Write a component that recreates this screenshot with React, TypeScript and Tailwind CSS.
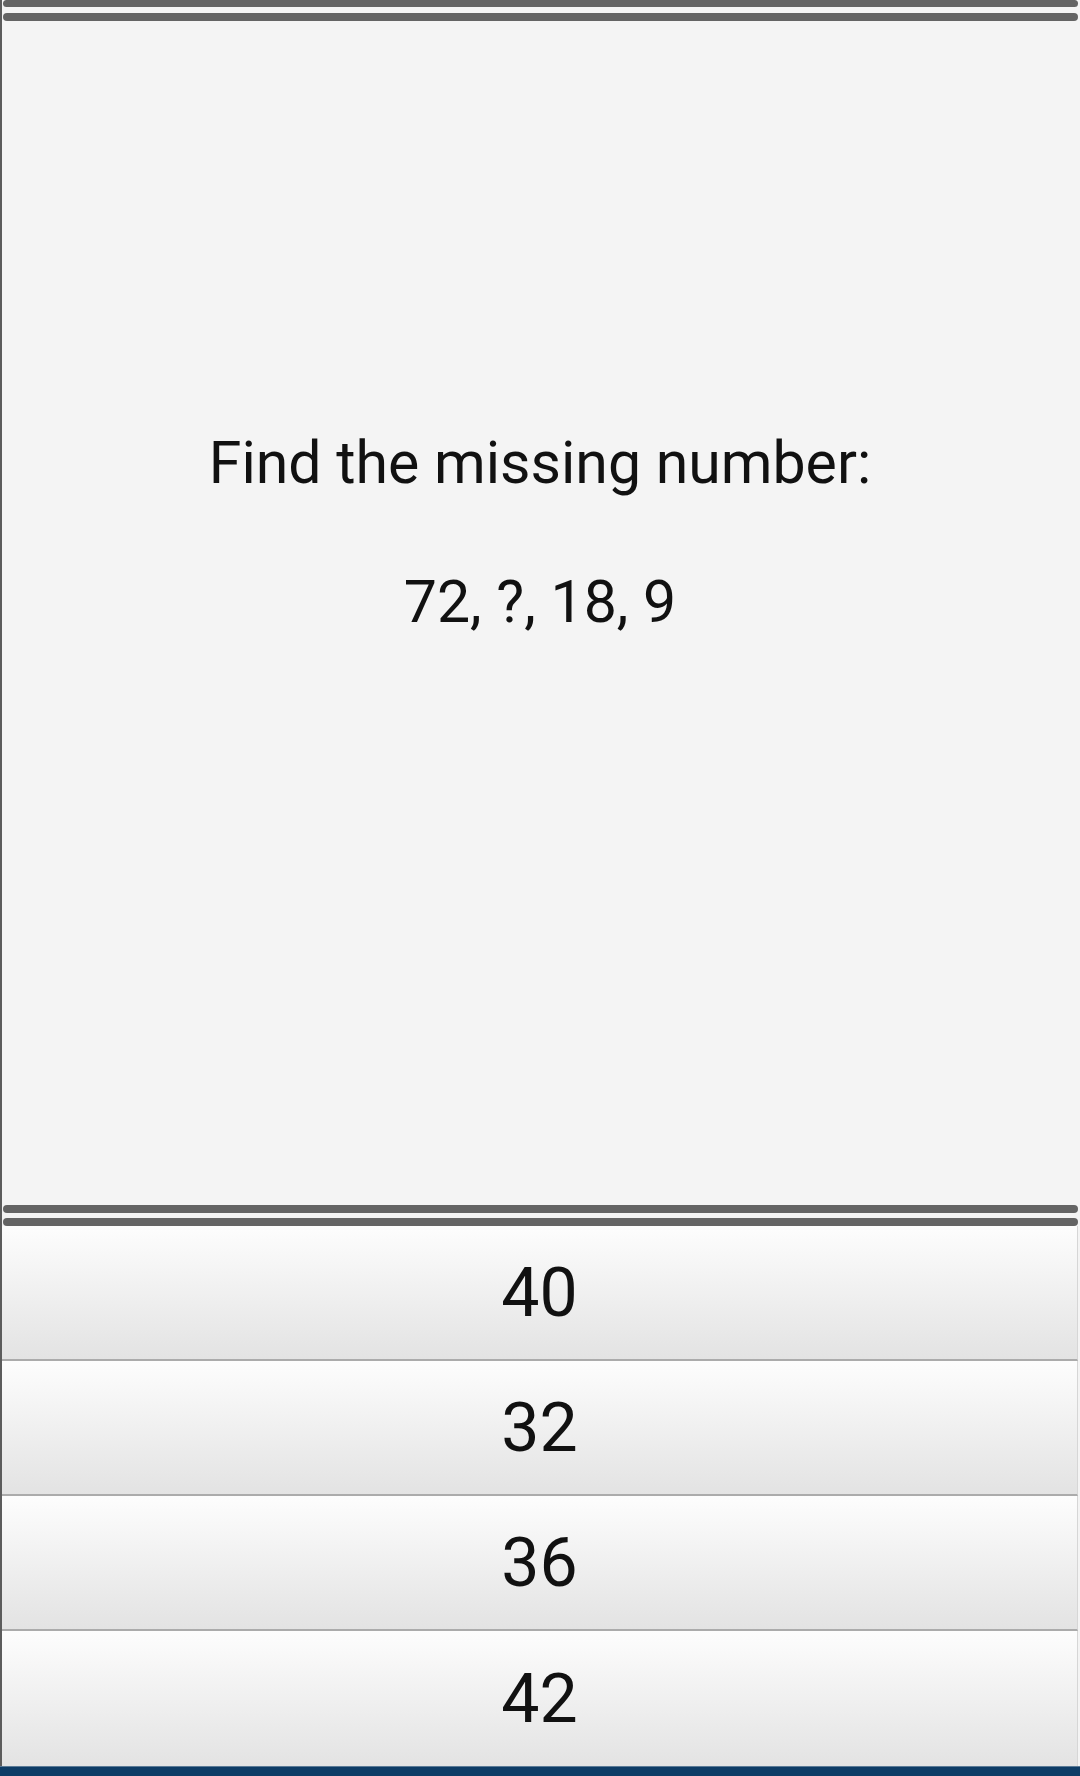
import React from "react";

const answers = ["40", "32", "36", "42"];

export default function App() {
  return (
    <div
      className="w-[1080px] h-[1776px] flex flex-col bg-[#f4f4f4] overflow-hidden"
      style={{ fontFamily: "Roboto, 'Noto Sans', sans-serif" }}
    >
      <div className="flex flex-1 flex-col border-l-2 border-[#5c5c5c] pr-[2px]">
        <div className="flex flex-col pt-0">
          <div className="h-[7px] rounded-full bg-[#646464] ml-[1px]" />
          <div className="h-[8px] rounded-full bg-[#646464] ml-[1px] mt-[6px]" />
        </div>
        <div className="flex flex-1 flex-col items-center pt-[409px] text-[#111]">
          <div className="text-[59px] leading-[66px]">Find the missing number:</div>
          <div className="text-[59px] leading-[66px] mt-[73px]">72, ?, 18, 9</div>
        </div>
        <div className="flex flex-col">
          <div className="h-[8px] rounded-full bg-[#646464] ml-[1px]" />
          <div className="h-[8px] rounded-full bg-[#646464] ml-[1px] mt-[5px]" />
        </div>
        <div className="flex flex-col">
          {answers.map((a, i) => (
            <div
              key={i}
              className="h-[135px] flex items-center justify-center bg-gradient-to-b from-[#fdfdfd] to-[#e3e3e3] border-b-2 border-[#ababab] border-r border-r-[#d6d6d6] last:border-b-0 text-[68px] leading-none text-[#111]"
            >
              {a}
            </div>
          ))}
        </div>
      </div>
      <div className="h-[10px] bg-[#0d3c66] border-t border-[#5a7a96]" />
    </div>
  );
}
